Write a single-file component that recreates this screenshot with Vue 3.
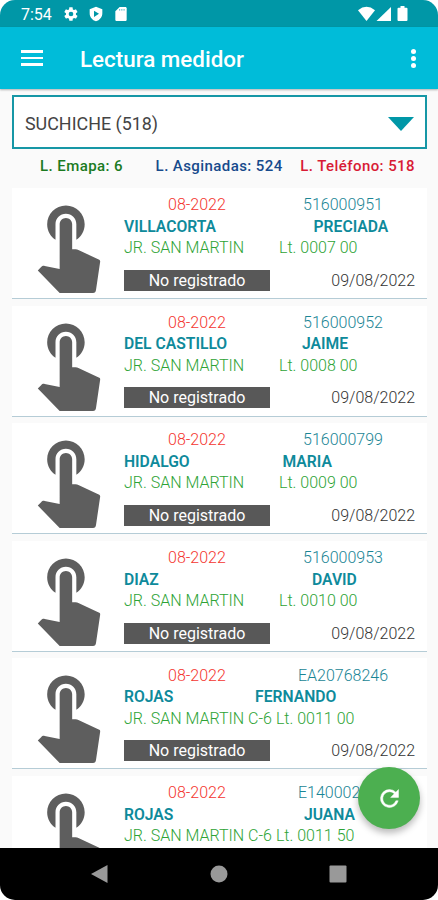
<template>
  <div class="screen">
    <div class="status-bar">
      <span class="clock">7:54</span>
      <svg class="status-icon gear" viewBox="0 0 24 24">
        <path fill-rule="evenodd" d="M19.4 13a7.500 7.500 0 0 0 0-2l2.100-1.600c.2-.2.3-.4.1-.7l-2-3.400c-.1-.2-.4-.3-.6-.2l-2.500 1a7.300 7.300 0 0 0-1.700-1l-.4-2.700c0-.2-.2-.4-.5-.4h-4c-.2 0-.4.2-.5.4L9 5.100c-.6.200-1.200.600-1.700 1l-2.500-1c-.2-.1-.5 0-.6.2l-2 3.400c-.1.200-.1.500.1.700L4.500 11a7.500 7.500 0 0 0 0 2l-2.200 1.600c-.2.200-.2.400-.1.700l2 3.400c.1.200.4.300.6.200l2.500-1c.5.400 1.100.8 1.700 1l.4 2.700c.1.200.3.400.5.400h4c.3 0 .5-.2.500-.4l.4-2.700c.6-.2 1.200-.6 1.700-1l2.500 1c.2.100.5 0 .6-.2l2-3.400c.1-.2.1-.5-.1-.7zM12 15.500a3.500 3.500 0 1 1 0-7 3.500 3.500 0 0 1 0 7z" />
      </svg>
      <svg class="status-icon shield" viewBox="0 0 24 24">
        <path fill-rule="evenodd" d="M12 1 2.500 4.800V11c0 5.700 4 10.600 9.500 12 5.500-1.400 9.500-6.300 9.500-12V4.800zM9 7.200l7.500 4.600L9 16.500z" />
      </svg>
      <svg class="status-icon sd" viewBox="0 0 24 24">
        <path d="M18.500 1.500H10L3.500 8v12.500c0 1.200.9 2 2 2h13c1.100 0 2-.8 2-2v-17c0-1.100-.9-2-2-2z" />
        <path class="sd-slots" d="M10 4.500v2.500M13.300 4.500v2.500M16.600 4.500v2.500" />
      </svg>
      <svg class="signals" viewBox="0 0 50 16">
        <path d="M0 4.200Q8.500-2.500 17 4.200L8.500 15z" />
        <path d="M33 1v14H18.500z" />
        <path d="M42.500 0h4v1.700h2q1 0 1 1V14q0 1-1 1h-8q-1 0-1-1V2.700q0-1 1-1h2z" />
      </svg>
    </div>

    <header class="app-bar">
      <button class="menu-btn" aria-label="Menu">
        <span></span><span></span><span></span>
      </button>
      <h1>Lectura medidor</h1>
      <button class="more-btn" aria-label="Más opciones">
        <span></span><span></span><span></span>
      </button>
    </header>

    <main class="content">
      <div class="select">
        <span>SUCHICHE (518)</span>
        <svg class="arrow" viewBox="0 0 26 14"><path d="M0 0h26L13 14z" /></svg>
      </div>

      <div class="totals">
        <span class="emapa">L. Emapa: 6</span>
        <span class="asignadas">L. Asginadas: 524</span>
        <span class="telefono">L. Teléfono: 518</span>
      </div>

      <div class="list">
        <article v-for="item in readings" :key="item.code" class="card">
          <svg class="touch" viewBox="0 0 24 24">
            <path d="M9 11.240V7.500C9 6.120 10.120 5 11.500 5S14 6.120 14 7.500v3.740c1.210-.81 2-2.180 2-3.740C16 5.010 13.990 3 11.500 3S7 5.010 7 7.500c0 1.560.79 2.930 2 3.740zM19.500 16l-5-2.300c-.2-.1-.4-.2-.7-.2H13v-6c0-.83-.67-1.500-1.500-1.500S10 6.670 10 7.500v10.740l-3.600-.75c-.35-.05-.6 0-.85.3l-.8.830L10 24h8c.45 0 .65-.3.72-.72l1-6.780c.03-.25-.02-.4-.22-.5z" />
          </svg>
          <div class="details">
            <div class="line top">
              <span class="period">08-2022</span>
              <span class="code" :style="{ marginLeft: item.codeGap + 'px' }">{{ item.code }}</span>
            </div>
            <div class="line name">
              <span :style="{ width: item.nameX + 'px' }">{{ item.surname }}</span>
              <span>{{ item.name }}</span>
            </div>
            <div class="line address">
              <span :class="{ street: !item.block }">JR. SAN MARTIN{{ item.block }}</span>
              <span>Lt. {{ item.lot }}</span>
            </div>
            <div class="line bottom">
              <span class="badge">No registrado</span>
              <span class="date">09/08/2022</span>
            </div>
          </div>
        </article>
      </div>

      <button class="fab" aria-label="Actualizar">
        <svg viewBox="0 0 24 24">
          <path d="M17.650 6.350A7.950 7.950 0 0 0 12 4a8 8 0 1 0 7.730 10h-2.080A6 6 0 1 1 12 6c1.660 0 3.140.69 4.220 1.780L13 11h7V4z" />
        </svg>
      </button>
    </main>

    <nav class="nav-bar">
      <svg viewBox="0 0 18 18"><path d="M16.500 0v18L0 9z" /></svg>
      <svg viewBox="0 0 18 18"><circle cx="9" cy="9" r="8.500" /></svg>
      <svg viewBox="0 0 18 18"><rect x="0.500" y="0.500" width="17" height="17" rx="1" /></svg>
    </nav>
  </div>
</template>

<script setup>
// nameX: start of the first name, codeGap: space between period and supply code
const readings = [
  { code: '516000951', codeGap: 77, surname: 'VILLACORTA', name: 'PRECIADA', nameX: 189.5, lot: '0007 00' },
  { code: '516000952', codeGap: 77, surname: 'DEL CASTILLO', name: 'JAIME', nameX: 178, lot: '0008 00' },
  { code: '516000799', codeGap: 77, surname: 'HIDALGO', name: 'MARIA', nameX: 158.5, lot: '0009 00' },
  { code: '516000953', codeGap: 77, surname: 'DIAZ', name: 'DAVID', nameX: 188, lot: '0010 00' },
  { code: 'EA20768246', codeGap: 72, surname: 'ROJAS', name: 'FERNANDO', nameX: 131, block: ' C-6', lot: '0011 00' },
  { code: 'E140002846', codeGap: 72, surname: 'ROJAS', name: 'JUANA', nameX: 180, block: ' C-6', lot: '0011 50' },
];
</script>

<style>
body {
  margin: 0;
  background: #fff;
}
</style>

<style scoped>
.screen {
  width: 438px;
  height: 900px;
  display: flex;
  flex-direction: column;
  overflow: hidden;
  border-radius: 15px;
  background: #fafafa;
  font-family: Roboto, sans-serif;
}

button {
  border: none;
  padding: 0;
  background: none;
}

.status-bar {
  height: 27px;
  flex-shrink: 0;
  box-sizing: border-box;
  padding: 1px 30px 0 21px;
  display: flex;
  align-items: center;
  background: #0097a7;
  color: #fff;
  fill: #fff;
}

.clock {
  width: 42px;
  margin-top: 1px;
  font-size: 16px;
}

.status-icon {
  width: 16px;
  height: 16px;
}

.shield {
  margin-left: 9px;
}

.sd {
  margin-left: 9px;
}

.sd-slots {
  stroke: #0097a7;
  stroke-width: 1;
}

.signals {
  width: 50px;
  height: 16px;
  margin-left: auto;
}

.app-bar {
  height: 62px;
  flex-shrink: 0;
  box-sizing: border-box;
  padding: 0 20px 0 21px;
  display: flex;
  align-items: center;
  background: #00bcd9;
  box-shadow: 0 1px 2px rgba(0, 0, 0, 0.3);
}

.menu-btn {
  width: 22px;
  display: flex;
  flex-direction: column;
  gap: 4px;
}

.menu-btn span {
  height: 2.5px;
  background: #fff;
}

h1 {
  flex: 1;
  margin: 2px 0 0 37px;
  font-size: 22.4px;
  font-weight: 500;
  line-height: 28px;
  color: #fff;
}

.more-btn {
  width: 9px;
  display: flex;
  flex-direction: column;
  align-items: center;
  gap: 2px;
}

.more-btn span {
  width: 5px;
  height: 5px;
  border-radius: 50%;
  background: #fff;
}

.content {
  position: relative;
  flex: 1;
  min-height: 0;
  overflow: hidden;
  padding: 6px 11px 0 12px;
}

.select {
  height: 54px;
  box-sizing: border-box;
  padding: 2px 11px 0 11px;
  display: flex;
  align-items: center;
  justify-content: space-between;
  border: 2px solid #1697a6;
  background: #fff;
  font-size: 17.9px;
  color: #444;
}

.arrow {
  width: 26px;
  height: 14px;
  margin-top: 2px;
  fill: #0097a7;
}

.totals {
  height: 39px;
  box-sizing: border-box;
  padding: 7px 12px 0 28px;
  display: flex;
  justify-content: space-between;
  font-size: 15px;
  font-weight: 500;
  line-height: 20px;
  letter-spacing: 0.42px;
}

.emapa {
  color: #1b7a1f;
}

.asignadas {
  margin-left: 15px;
  color: #174a8c;
}

.telefono {
  color: #d81b35;
}

.list {
  display: flex;
  flex-direction: column;
  gap: 6.6px;
}

.card {
  height: 111px;
  flex-shrink: 0;
  box-sizing: border-box;
  display: flex;
  border-bottom: 1.5px solid #b5ccd6;
  background: #fff;
}

.touch {
  width: 100px;
  height: 100px;
  margin: 5px 6px 0 6px;
  flex-shrink: 0;
  fill: #5e5e5e;
}

.details {
  flex: 1;
  padding: 6.3px 12px 0 0;
}

.line {
  height: 21.5px;
  display: flex;
  line-height: 21.5px;
  font-size: 16px;
  font-weight: 300;
  white-space: nowrap;
}

.period {
  width: 58px;
  margin-left: 44px;
  color: #f4362f;
}

.code {
  color: #1a8595;
}

.name {
  font-size: 15.7px;
  font-weight: 600;
  line-height: 22.5px;
  color: #0e8a9b;
}

.address {
  gap: 4px;
  color: #2da335;
}

.street {
  width: 151px;
}

.bottom {
  margin-top: 11px;
  justify-content: space-between;
}

.badge {
  width: 146px;
  height: 21px;
  line-height: 22px;
  text-align: center;
  font-weight: 400;
  background: #585858;
  color: #fff;
}

.date {
  color: #333;
}

.fab {
  position: absolute;
  right: 18px;
  bottom: 19px;
  width: 62px;
  height: 62px;
  display: flex;
  align-items: center;
  justify-content: center;
  border-radius: 50%;
  background: #4caf50;
  box-shadow: 0 4px 7px rgba(0, 0, 0, 0.28);
}

.fab svg {
  width: 27px;
  height: 27px;
  fill: #fff;
  stroke: #fff;
  stroke-width: 0.4;
}

.nav-bar {
  height: 52px;
  flex-shrink: 0;
  box-sizing: border-box;
  padding: 0 91px 0 91px;
  display: flex;
  align-items: center;
  justify-content: space-between;
  background: #000;
}

.nav-bar svg {
  width: 18px;
  height: 18px;
  fill: #999;
}
</style>
